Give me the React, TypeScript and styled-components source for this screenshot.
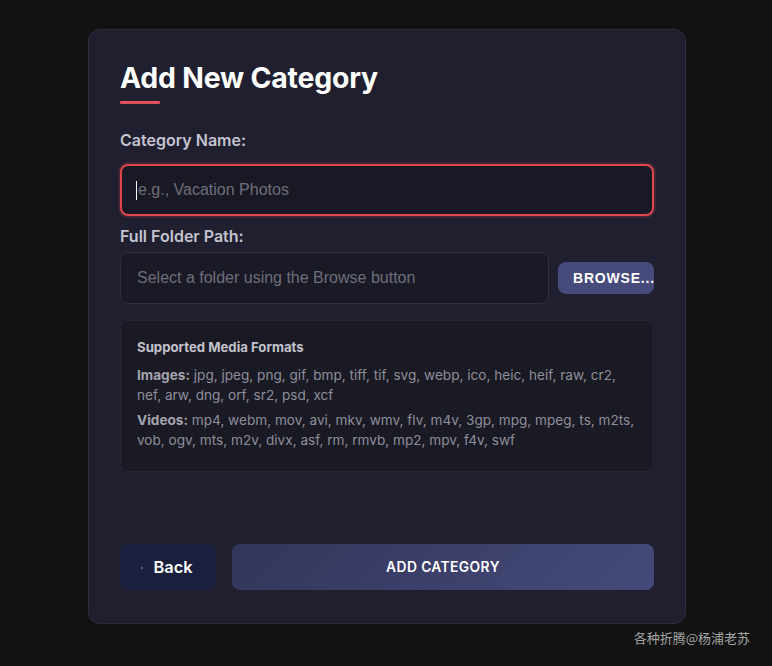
import React from "react";
import styled, { createGlobalStyle } from "styled-components";

const Global = createGlobalStyle`
  html, body { margin: 0; padding: 0; background: #121212; }
  body { font-family: Inter, "Noto Sans", sans-serif; }
  * { box-sizing: border-box; }
`;

const Page = styled.div`
  width: 772px;
  height: 666px;
  padding: 29px 0 0 88px;
  display: flex;
  flex-direction: column;
  align-items: flex-start;
  background: #121212;
`;

const Card = styled.div`
  width: 598px;
  height: 595px;
  background: #1f1f2f;
  border: 1px solid #2d2d3d;
  border-radius: 12px;
  padding: 31px 31px 33px 31px;
  display: flex;
  flex-direction: column;
`;

const Title = styled.h1`
  margin: 0;
  font-family: Inter, sans-serif;
  font-weight: 700;
  font-size: 28.4px;
  line-height: 34px;
  color: #ffffff;
  letter-spacing: -0.2px;
`;

const TitleBar = styled.div`
  width: 40px;
  height: 3px;
  background: #e0505a;
  border-radius: 1px;
  margin-top: 6px;
`;

const Label = styled.label<{ $top: number }>`
  display: block;
  margin-top: ${(p) => p.$top}px;
  font-family: Inter, sans-serif;
  font-weight: 600;
  font-size: 16px;
  line-height: 20px;
  color: #c4c4cf;
`;

const NameInput = styled.div`
  margin-top: 14px;
  height: 52px;
  border: 2px solid #e0464e;
  border-radius: 8px;
  background: #191925;
  box-shadow: 0 0 0 2px rgba(224, 70, 78, 0.18);
  display: flex;
  align-items: center;
  padding-left: 14px;
  font-family: "Liberation Sans", Arial, sans-serif;
  font-size: 16px;
  color: #6e6e7a;
`;

const Caret = styled.span`
  display: inline-block;
  width: 1px;
  height: 19px;
  background: #ffffff;
  margin-right: 1px;
`;

const Row = styled.div`
  margin-top: 6px;
  display: flex;
  align-items: center;
  gap: 9px;
`;

const PathInput = styled.div`
  flex: 1;
  height: 52px;
  border: 1px solid #2e2e3e;
  border-radius: 8px;
  background: #1a1a26;
  display: flex;
  align-items: center;
  padding-left: 16px;
  font-family: "Liberation Sans", Arial, sans-serif;
  font-size: 16px;
  color: #6e6e7a;
`;

const BrowseButton = styled.button`
  width: 96px;
  height: 32px;
  border: none;
  border-radius: 8px;
  background: #464b7b;
  color: #ffffff;
  font-family: "Liberation Sans", Arial, sans-serif;
  font-weight: 700;
  font-size: 14px;
  letter-spacing: 0.8px;
  text-align: left;
  padding: 0 0 0 15px;
  white-space: nowrap;
`;

const InfoBox = styled.div`
  margin-top: 16px;
  background: #1a1a25;
  border: 1px solid #262634;
  border-radius: 8px;
  padding: 16px 12px 16px 16px;
`;

const InfoTitle = styled.div`
  font-family: Inter, sans-serif;
  font-weight: 700;
  font-size: 13.2px;
  line-height: 20px;
  color: #c2c2cc;
  margin-bottom: 8px;
`;

const InfoText = styled.p`
  margin: 0 0 5px 0;
  font-family: Inter, sans-serif;
  font-size: 13.6px;
  line-height: 20px;
  color: #8e8e9a;

  b {
    font-weight: 700;
    color: #a4a4ae;
  }
`;

const Actions = styled.div`
  margin-top: auto;
  display: flex;
  gap: 16px;
`;

const BackButton = styled.button`
  width: 96px;
  height: 46px;
  border: none;
  border-radius: 8px;
  background: #1b1f3e;
  color: #ffffff;
  font-family: Inter, sans-serif;
  font-weight: 600;
  font-size: 16.4px;
  display: flex;
  align-items: center;
  justify-content: center;
  padding: 0 2px 0 0;
`;

const Dot = styled.span`
  width: 2px;
  height: 2px;
  background: #5a5f80;
  margin-right: 10px;
  margin-top: 2px;
`;

const AddButton = styled.button`
  flex: 1;
  height: 46px;
  border: none;
  border-radius: 8px;
  background: linear-gradient(135deg, #32365a 0%, #454a7a 100%);
  color: #ffffff;
  font-family: Inter, sans-serif;
  font-weight: 600;
  font-size: 13.8px;
  letter-spacing: 0.4px;
`;

const Footer = styled.div`
  width: 662px;
  display: flex;
  justify-content: flex-end;
  padding: 5px 0 0 0;
  font-family: "Noto Sans CJK SC", sans-serif;
  font-size: 13px;
  line-height: 18px;
  color: #a6a6a6;
`;

export default function App() {
  return (
    <>
      <Global />
      <Page>
        <Card>
          <Title>Add New Category</Title>
          <TitleBar />
          <Label $top={26}>Category Name:</Label>
          <NameInput>
            <Caret />
            e.g., Vacation Photos
          </NameInput>
          <Label $top={10}>Full Folder Path:</Label>
          <Row>
            <PathInput>Select a folder using the Browse button</PathInput>
            <BrowseButton>BROWSE...</BrowseButton>
          </Row>
          <InfoBox>
            <InfoTitle>Supported Media Formats</InfoTitle>
            <InfoText>
              <b>Images:</b> jpg, jpeg, png, gif, bmp, tiff, tif, svg, webp, ico, heic, heif, raw, cr2,
              nef, arw, dng, orf, sr2, psd, xcf
            </InfoText>
            <InfoText>
              <b>Videos:</b> mp4, webm, mov, avi, mkv, wmv, flv, m4v, 3gp, mpg, mpeg, ts, m2ts,
              vob, ogv, mts, m2v, divx, asf, rm, rmvb, mp2, mpv, f4v, swf
            </InfoText>
          </InfoBox>
          <Actions>
            <BackButton>
              <Dot />
              Back
            </BackButton>
            <AddButton>ADD CATEGORY</AddButton>
          </Actions>
        </Card>
        <Footer>各种折腾@杨浦老苏</Footer>
      </Page>
    </>
  );
}
